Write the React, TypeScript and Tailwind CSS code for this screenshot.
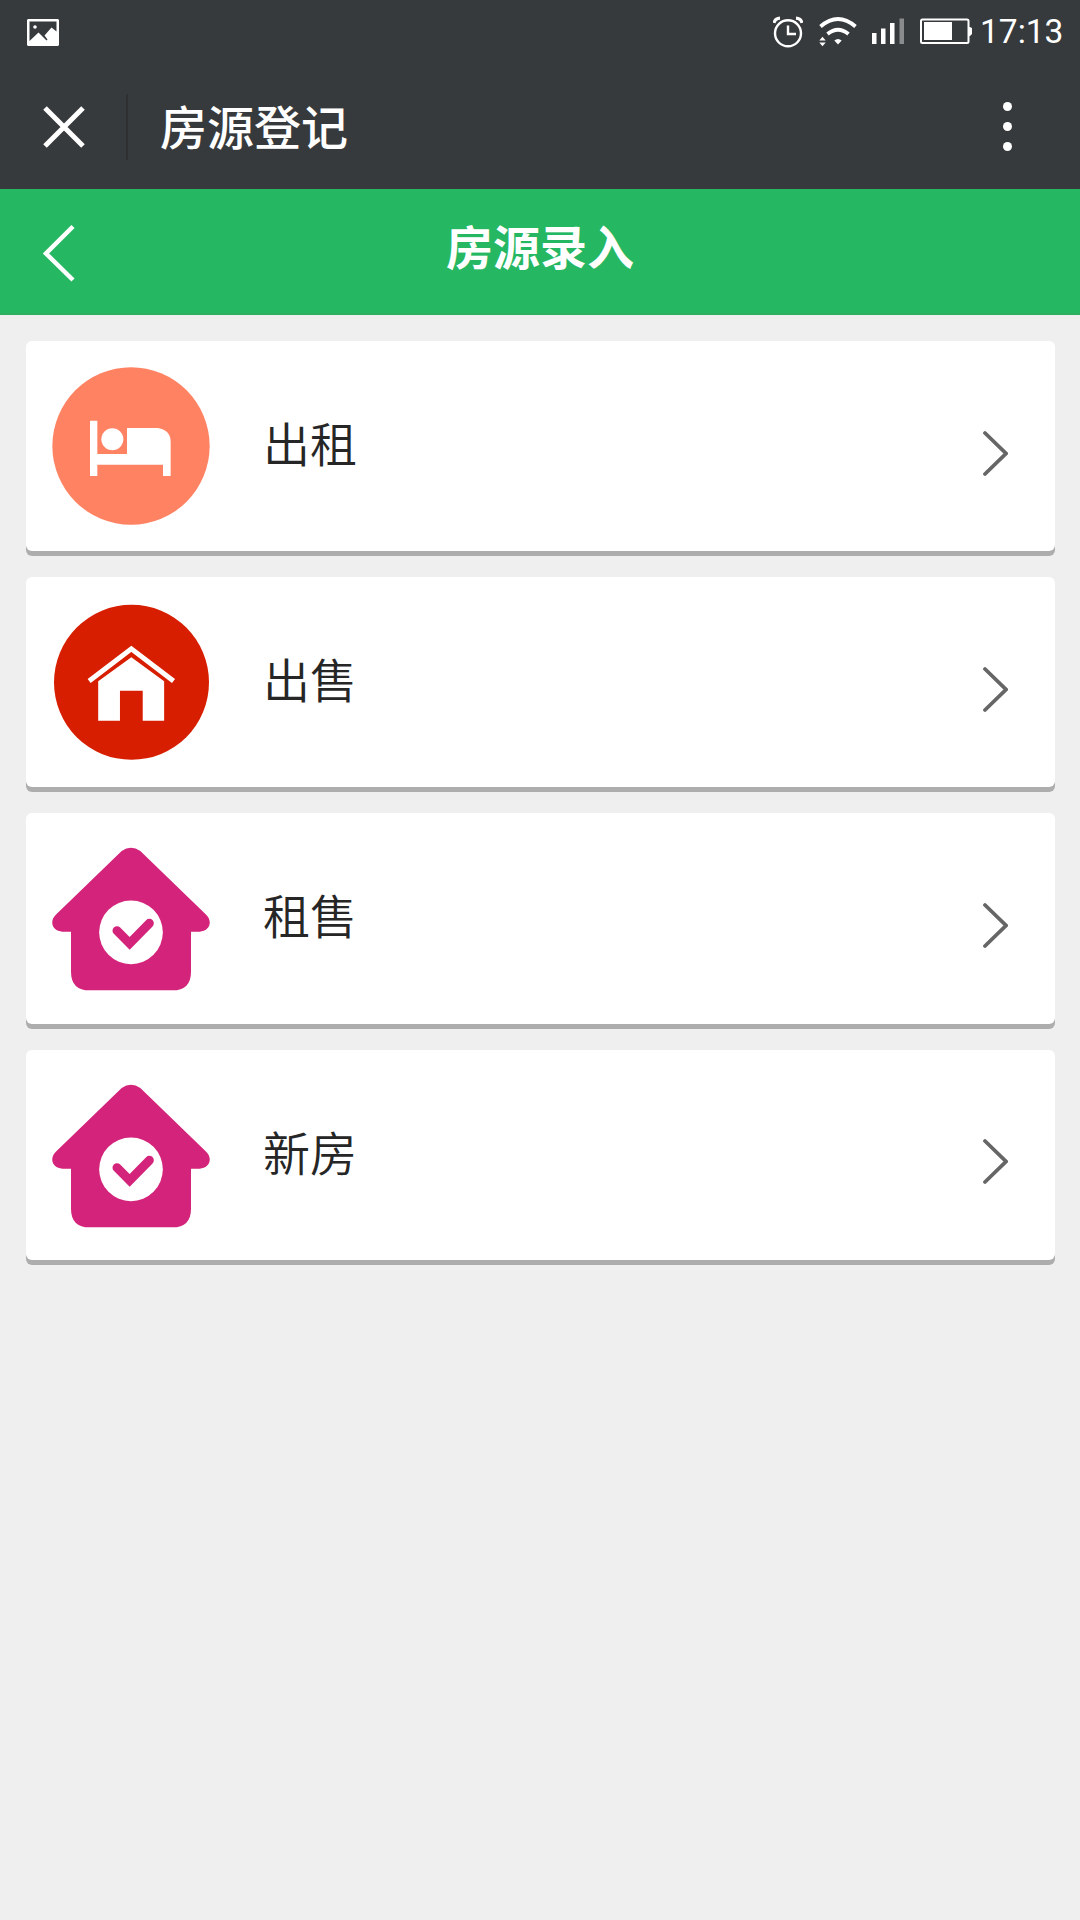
import type { ReactNode } from "react";

type MenuItem = {
  label: string;
  icon: ReactNode;
};

function BedIcon() {
  return (
    <svg viewBox="-1 -1 474 474" className="size-[158px]">
      <circle cx="236" cy="236" r="236" fill="#ff8262" />
      <path
        d="M113 160h22v100h89V182h93q38 6 38 42v102h-23v-34H135v34h-22z"
        fill="#fff"
      />
      <circle cx="180" cy="216" r="33" fill="#fff" />
    </svg>
  );
}

function HomeIcon() {
  return (
    <svg viewBox="-1 0 472 472" className="size-[158px]">
      <circle cx="236.500" cy="237" r="231.500" fill="#d81e00" />
      <path d="M110 233L236 137l126 96" fill="none" stroke="#fff" strokeWidth="15" />
      <path d="M137 234l99-72 98 72v118h-64v-90h-68v90h-65z" fill="#fff" />
    </svg>
  );
}

function HouseCheckIcon() {
  return (
    <svg viewBox="-1 0 474 474" className="size-[158px]">
      <path
        d="M208 36q28-20 56 0L460 226c24 22 10 52-18 52h-26v120q0 56-56 56H112q-56 0-56-56V278H30c-28 0-42-30-18-52z"
        fill="#d4237a"
      />
      <circle cx="236" cy="280" r="95.500" fill="#fff" />
      <path
        d="M194 275l38 38 59-60"
        fill="none"
        stroke="#d4237a"
        strokeWidth="27"
        strokeLinecap="round"
      />
    </svg>
  );
}

const menuItems: MenuItem[] = [
  { label: "出租", icon: <BedIcon /> },
  { label: "出售", icon: <HomeIcon /> },
  { label: "租售", icon: <HouseCheckIcon /> },
  { label: "新房", icon: <HouseCheckIcon /> },
];

function StatusBar() {
  return (
    <div className="flex h-16 items-center pl-[27px] pr-[17px] text-white">
      <svg viewBox="0 0 32 27" className="h-[27px] w-8">
        <path
          fillRule="evenodd"
          d="M1 0h30l1 1v25l-1 1H1l-1-1V1zM2.500 2.500v19.500l9-8.500 8 8 1-1-3-4 7-8 5 4V2.500z"
          fill="#fff"
        />
        <circle cx="8" cy="8" r="1.800" fill="#fff" />
      </svg>

      <div className="ml-auto flex items-center">
        {/* Alarm */}
        <svg viewBox="0 0 30 32" className="mr-4 h-8 w-[30px]" fill="none" stroke="#fff">
          <circle cx="15" cy="17.300" r="13" strokeWidth="2.400" />
          <path d="M15 9.500v8.500h8" strokeWidth="2.400" />
          <path d="M1 7Q2 2.500 7 2.200M29 7Q28 2.500 23 2.200" strokeWidth="3.200" />
        </svg>

        {/* Wifi */}
        <svg viewBox="0 0 38 32" className="mr-[15px] h-8 w-[38px]">
          <path
            d="M1.500 10.500Q19-4.500 36.500 10.500M8.500 18Q19 9.500 29.500 18"
            fill="none"
            stroke="#fff"
            strokeWidth="3.800"
          />
          <path d="M15.300 24.500Q19 21.500 22.700 24.500L19 28.500z" fill="#fff" />
          <path d="M.3 24.500L3.500 20.800l3.200 3.700zM.3 26.500h6.400l-3.200 3.700z" fill="#fff" />
        </svg>

        {/* Signal */}
        <svg viewBox="0 0 32 32" className="mr-4 h-8 w-8" fill="#fff">
          <path d="M0 17h4.500v11H0zM9 12.500h4.500V28H9zM18 7h4.500v21H18z" />
          <path d="M27.500 2.500H32V28h-4.500z" fill="#898b8c" />
        </svg>

        {/* Battery */}
        <svg viewBox="0 0 52 32" className="mr-2 h-8 w-[52px]">
          <rect
            x="1"
            y="3.500"
            width="47.500"
            height="23.500"
            rx="1.500"
            fill="none"
            stroke="#fff"
            strokeWidth="2"
          />
          <path d="M4 6h28v18H4zM48 11h2l2 1v6l-2 2h-2z" fill="#fff" />
        </svg>

        <span className="mb-px w-[83px] whitespace-nowrap font-['Roboto'] text-[33.500px] leading-none">
          17:13
        </span>
      </div>
    </div>
  );
}

function TitleBar() {
  return (
    <div className="flex h-[125px] items-center">
      <svg viewBox="0 0 42 42" className="ml-[42.500px] size-[42px]">
        <path d="M2 2l38 38M40 2L2 40" stroke="#fff" strokeWidth="5" />
      </svg>
      <div className="ml-[41.500px] h-[66px] w-0.5 bg-[#2e3032]" />
      <h1 className="mb-[5px] ml-8 text-[47px] leading-none font-medium text-white">房源登记</h1>
      <div className="mr-[68.500px] ml-auto flex flex-col gap-[11px]">
        <span className="size-[9px] rounded-full bg-white" />
        <span className="size-[9px] rounded-full bg-white" />
        <span className="size-[9px] rounded-full bg-white" />
      </div>
    </div>
  );
}

function MenuCard({ label, icon }: MenuItem) {
  return (
    <li className="flex h-[210.200px] items-start rounded-[6px] bg-white pt-[26px] pr-[47px] pl-[26px] shadow-[0_5px_0_#adadad]">
      {icon}
      <span className="ml-[53px] pt-[51px] text-[47px] leading-[48px] font-[350] text-[#262626]">
        {label}
      </span>
      <svg viewBox="0 0 26 48" className="mt-[61.500px] ml-auto h-12 w-[26px]">
        <path
          d="M3 4l21 20.500L3 45"
          fill="none"
          stroke="#666"
          strokeWidth="3.800"
          strokeLinecap="round"
        />
      </svg>
    </li>
  );
}

export default function App() {
  return (
    <div className="min-h-[1920px] w-[1080px] bg-[#efefef] font-['Noto_Sans_CJK_SC',sans-serif]">
      <header className="bg-[#373a3c]">
        <StatusBar />
        <TitleBar />
      </header>

      {/* Page header */}
      <div className="grid h-[126px] grid-cols-[1fr_auto_1fr] items-center border-b-2 border-[#2fae62] bg-[#26b763]">
        <svg viewBox="0 0 32 58" className="mt-1 ml-[43px] h-[58px] w-8">
          <path d="M30 2.500L3 29.500l27 26.500" fill="none" stroke="#fff" strokeWidth="4.500" />
        </svg>
        <h2 className="mb-3.5 text-[47px] leading-none font-bold text-white">房源录入</h2>
      </div>

      <ul className="flex flex-col gap-[26px] pt-[26px] pr-[25px] pl-[26px]">
        {menuItems.map((item) => (
          <MenuCard key={item.label} {...item} />
        ))}
      </ul>
    </div>
  );
}
